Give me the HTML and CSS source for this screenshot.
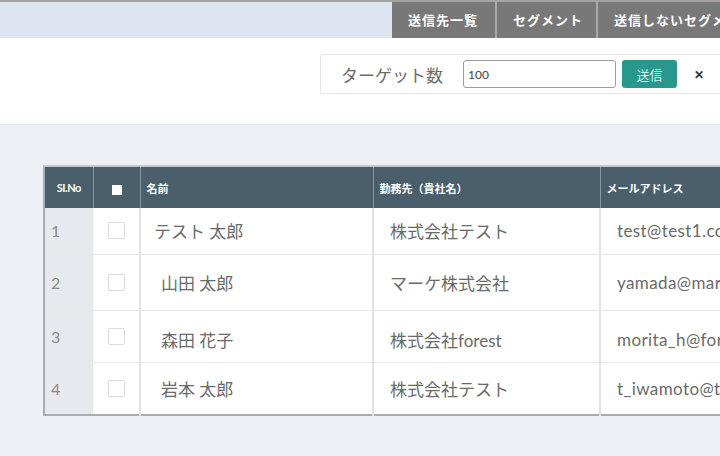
FILE: index.html
```html
<!DOCTYPE html>
<html lang="ja">
<head>
    <meta charset="UTF-8">
    <meta name="viewport" content="width=device-width, initial-scale=1.0">
    <title>送信先一覧</title>
    <link rel="stylesheet" href="styles.css">
</head>
<body>
    <div class="topbar">
        <div class="tabs">
            <span class="tab tab-list">送信先一覧</span>
            <span class="tab tab-segment">セグメント</span>
            <span class="tab">送信しないセグメント</span>
        </div>
    </div>
    <div class="toolbar">
        <div class="target-box">
            <span class="target-label">ターゲット数</span>
            <input class="target-input" type="text" value="100">
            <button class="btn-send" type="button">送信</button>
            <span class="close">&#x2715;</span>
        </div>
    </div>
    <div class="main">
        <table class="list">
            <colgroup>
                <col class="w-no">
                <col class="w-check">
                <col class="w-name">
                <col class="w-company">
                <col class="w-mail">
            </colgroup>
            <thead>
                <tr>
                    <th class="col-no">SI.No</th>
                    <th class="col-check"><span class="check-head"></span></th>
                    <th>名前</th>
                    <th>勤務先（貴社名）</th>
                    <th>メールアドレス</th>
                </tr>
            </thead>
            <tbody>
                <tr class="row-1">
                    <td class="col-no">1</td>
                    <td class="col-check"><span class="check"></span></td>
                    <td class="col-name">テスト 太郎</td>
                    <td class="col-company">株式会社テスト</td>
                    <td class="col-mail">test@test1.com</td>
                </tr>
                <tr class="row-2">
                    <td class="col-no">2</td>
                    <td class="col-check"><span class="check"></span></td>
                    <td class="col-name indent">山田 太郎</td>
                    <td class="col-company">マーケ株式会社</td>
                    <td class="col-mail">yamada@marke.co.jp</td>
                </tr>
                <tr class="row-3">
                    <td class="col-no">3</td>
                    <td class="col-check"><span class="check"></span></td>
                    <td class="col-name indent">森田 花子</td>
                    <td class="col-company">株式会社forest</td>
                    <td class="col-mail">morita_h@forest.jp</td>
                </tr>
                <tr class="row-4">
                    <td class="col-no">4</td>
                    <td class="col-check"><span class="check"></span></td>
                    <td class="col-name indent">岩本 太郎</td>
                    <td class="col-company">株式会社テスト</td>
                    <td class="col-mail">t_iwamoto@test.co.jp</td>
                </tr>
            </tbody>
        </table>
    </div>
</body>
</html>
```

FILE: styles.css
```css
html, body{
    margin: 0;
    padding: 0;
    height: 100%;
    overflow: hidden;
}
body{
    font-family: "Lato", "Noto Sans CJK JP", sans-serif;
    background-color: #edf1f5;
    color: #6a6a6a;
}
.topbar{
    height: 36px;
    border-top: 2px solid #a4a4a4;
    background-color: #dce5f0;
    overflow: hidden;
}
.tabs{
    display: flex;
    padding-left: 392px;
    white-space: nowrap;
}
.tab{
    display: block;
    flex-shrink: 0;
    height: 36px;
    line-height: 36px;
    padding: 0 16px;
    background-color: #787878;
    color: #fff;
    font-size: 13px;
    font-weight: bold;
    letter-spacing: 1px;
    border-right: 2px solid #a9a9a9;
}
.tab-list{
    width: 71px;
}
.tab-segment{
    width: 67px;
    text-align: center;
}
.toolbar{
    height: 86px;
    background-color: #fff;
    box-shadow: 0 1px 2px rgba(0, 0, 0, 0.06);
    padding-top: 16px;
    box-sizing: border-box;
    overflow: hidden;
}
.target-box{
    margin-left: 320px;
    width: 420px;
    height: 40px;
    border: 1px solid #e6e6e6;
    border-radius: 2px;
    display: flex;
    align-items: center;
    padding-left: 20px;
    box-sizing: border-box;
}
.target-label{
    font-size: 17px;
    color: #6c6c6c;
    margin-right: 20px;
}
.target-input{
    width: 153px;
    height: 28px;
    box-sizing: border-box;
    border: 1px solid #9c9c9c;
    border-radius: 3px;
    padding: 0 4px;
    font-family: "Lato", sans-serif;
    font-size: 12px;
    color: #444;
    margin-right: 6px;
}
.btn-send{
    width: 55px;
    height: 28px;
    border: none;
    border-radius: 3px;
    background-color: #27998c;
    color: #d8f0ec;
    font-family: "Noto Sans CJK JP", sans-serif;
    font-size: 13px;
    padding: 0;
}
.close{
    margin-left: 17px;
    font-size: 12px;
    font-weight: bold;
    color: #333;
}
.main{
    padding: 41px 0 0 43px;
}
.list{
    border-collapse: collapse;
    table-layout: fixed;
    width: 780px;
    background-color: #fff;
    border-top: 2px solid #c6c9cc;
    border-left: 2px solid #a9adb1;
    border-bottom: 2px solid #a9adb1;
}
.w-no{
    width: 49px;
}
.w-check{
    width: 47px;
}
.w-name{
    width: 233px;
}
.w-company{
    width: 227px;
}
.w-mail{
    width: 224px;
}
.list th{
    height: 41px;
    background-color: #4a5e6b;
    color: #fff;
    font-size: 11px;
    font-weight: bold;
    text-align: left;
    padding: 0 6px;
    border-right: 1px solid #8796a1;
    font-family: "Noto Sans CJK JP", sans-serif;
}
.list td{
    font-size: 17px;
    padding: 0 16px;
    border-right: 2px solid #e2e2e2;
    border-bottom: 1px solid #e8e8e8;
    white-space: nowrap;
    overflow: hidden;
}
.list th.col-no{
    text-align: center;
    letter-spacing: -0.5px;
    font-family: "Lato", sans-serif;
}
.list th.col-check{
    text-align: center;
}
.list td.col-no{
    background-color: #e6e9ee;
    color: #8a8a8a;
    font-size: 16px;
    padding: 0 6px;
    border-right: none;
}
.list td.col-check{
    text-align: center;
    padding: 0;
}
.list td.col-name{
    padding-left: 13px;
}
.list td.indent{
    padding-left: 20px;
}
.list td.col-mail{
    border-right: none;
    letter-spacing: 0.4px;
}
.check-head{
    display: inline-block;
    width: 10px;
    height: 10px;
    background-color: #fff;
    vertical-align: middle;
}
.check{
    display: inline-block;
    width: 15px;
    height: 15px;
    border: 1px solid #dcdcdc;
    border-radius: 2px;
    vertical-align: middle;
    margin-top: -4px;
}
.row-1{
    height: 46px;
}
.row-2{
    height: 56px;
}
.row-3{
    height: 52px;
}
.row-3 td{
    padding-top: 6px;
}
.row-3 td.col-check{
    padding-top: 0;
}
.row-4{
    height: 53px;
}
.row-4 td{
    border-bottom: none;
}
```
